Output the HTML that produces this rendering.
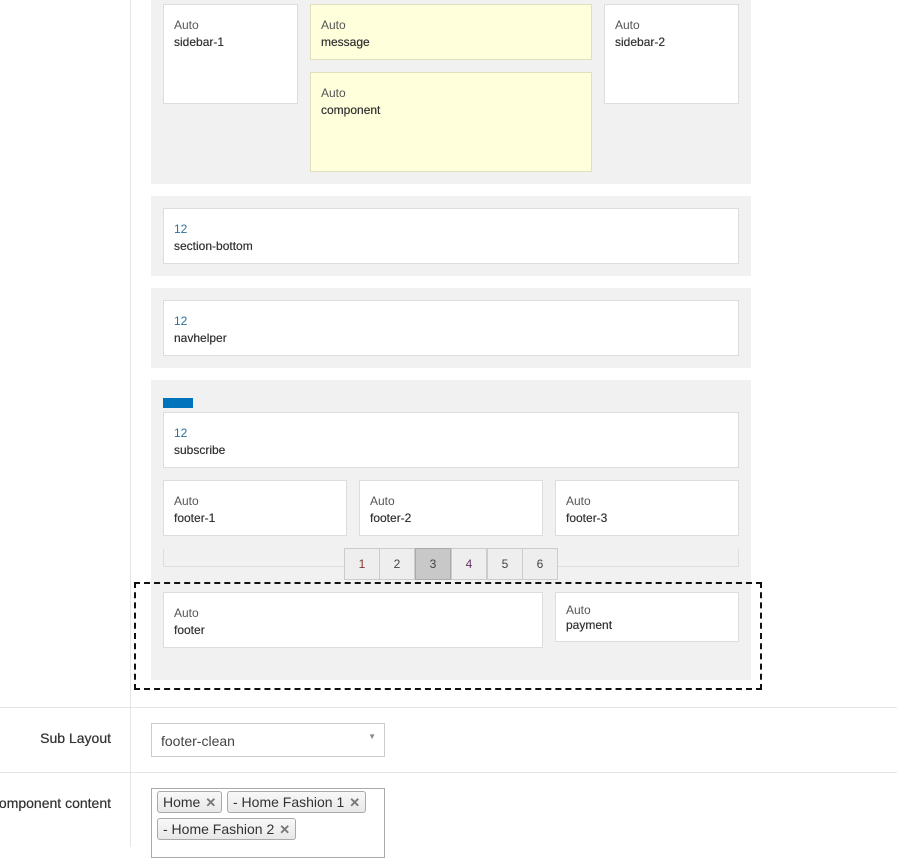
<!DOCTYPE html>
<html><head><meta charset="utf-8"><style>
body{margin:0;width:897px;height:847px;overflow:hidden;background:#fff;font-family:"Liberation Sans",sans-serif;position:relative}
.a{position:absolute;box-sizing:border-box}
.p{background:#f1f1f1}
.b{background:#fff;border:1px solid #ddd;padding:12px 10px 0;font-size:12px;line-height:17px;color:#555}
.b b{display:block;font-weight:normal;color:#333;font-size:12px;text-shadow:0 0 0.4px #333}
.y{background:#ffffdc;border-color:#e0e0c0}
.n{color:#2a7399}
.pg{top:548px;height:32px;width:36px;border:1px solid #ccc;background:#eee;font-size:12px;text-align:center;line-height:30px;color:#444}
.t{border:1px solid #aaa;border-radius:3px;background:linear-gradient(#f8f8f8,#e8e8e8);font-size:14px;color:#333;height:22px;line-height:20px;padding:0 5px}
.t i{font-style:normal;color:#777;font-size:13px;font-weight:bold;margin-left:5px}
.l{font-size:14px;font-weight:normal;color:#333;text-shadow:0 0 0.5px #333}
</style></head><body>
<div class="a" style="left:130px;top:0;width:1px;height:847px;background:#e5e5e5"></div>
<div class="a p" style="left:151px;top:0;width:600px;height:184px"></div>
<div class="a b" style="left:163px;top:4px;width:135px;height:100px">Auto<b>sidebar-1</b></div>
<div class="a b y" style="left:310px;top:4px;width:282px;height:56px">Auto<b>message</b></div>
<div class="a b y" style="left:310px;top:72px;width:282px;height:100px">Auto<b>component</b></div>
<div class="a b" style="left:604px;top:4px;width:135px;height:100px">Auto<b>sidebar-2</b></div>
<div class="a p" style="left:151px;top:196px;width:600px;height:80px"></div>
<div class="a b" style="left:163px;top:208px;width:576px;height:56px"><span class="n">12</span><b>section-bottom</b></div>
<div class="a p" style="left:151px;top:288px;width:600px;height:80px"></div>
<div class="a b" style="left:163px;top:300px;width:576px;height:56px"><span class="n">12</span><b>navhelper</b></div>
<div class="a p" style="left:151px;top:380px;width:600px;height:300px"></div>
<div class="a" style="left:163px;top:398px;width:30px;height:10px;background:#0073bd"></div>
<div class="a b" style="left:163px;top:412px;width:576px;height:56px"><span class="n">12</span><b>subscribe</b></div>
<div class="a b" style="left:163px;top:480px;width:184px;height:56px">Auto<b>footer-1</b></div>
<div class="a b" style="left:359px;top:480px;width:184px;height:56px">Auto<b>footer-2</b></div>
<div class="a b" style="left:555px;top:480px;width:184px;height:56px">Auto<b>footer-3</b></div>
<div class="a" style="left:163px;top:549px;width:576px;height:18px;border:1px solid #ddd;border-top:none"></div>
<div class="a pg" style="left:344px;color:#833">1</div>
<div class="a pg" style="left:379px">2</div>
<div class="a pg" style="left:415px;background:#c8c8c8;border-color:#aaa">3</div>
<div class="a pg" style="left:451px;color:#636">4</div>
<div class="a pg" style="left:487px">5</div>
<div class="a pg" style="left:522px">6</div>
<div class="a b" style="left:163px;top:592px;width:380px;height:56px">Auto<b>footer</b></div>
<div class="a b" style="left:555px;top:592px;width:184px;height:50px;padding-top:10px;line-height:15px">Auto<b>payment</b></div>
<div class="a" style="left:134px;top:582px;width:628px;height:108px;border:2px dashed #111"></div>
<div class="a" style="left:0;top:707px;width:897px;height:1px;background:#e5e5e5"></div>
<div class="a" style="left:0;top:772px;width:897px;height:1px;background:#e5e5e5"></div>
<div class="a l" style="left:0;top:730px;width:111px;text-align:right">Sub Layout</div>
<div class="a" style="left:151px;top:723px;width:234px;height:34px;border:1px solid #ccc;font-size:14px;color:#444;padding:9px 9px">footer-clean<span style="position:absolute;right:8px;top:8px;font-size:8px;color:#888">▼</span></div>
<div class="a l" style="left:-20px;top:795px;width:131px;text-align:right;white-space:nowrap">Component content</div>
<div class="a" style="left:151px;top:788px;width:234px;height:70px;border:1px solid #aaa"></div>
<div class="a t" style="left:157px;top:791px">Home<i>✕</i></div>
<div class="a t" style="left:227px;top:791px">- Home Fashion 1<i>✕</i></div>
<div class="a t" style="left:157px;top:818px">- Home Fashion 2<i>✕</i></div>
</body></html>
